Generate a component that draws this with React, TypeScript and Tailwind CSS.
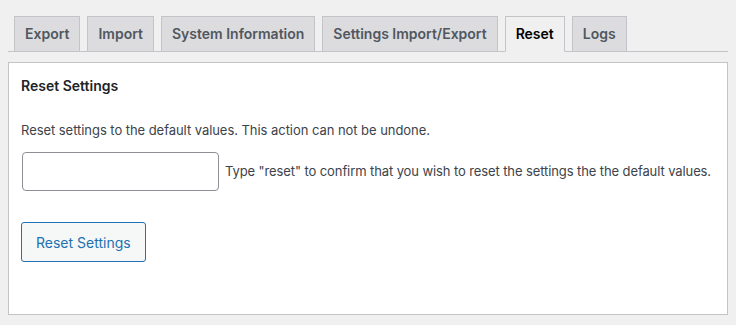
export default function App() {
  const tabs = ['Export', 'Import', 'System Information', 'Settings Import/Export', 'Reset', 'Logs']
  const active = 'Reset'

  return (
    <main
      className="min-h-screen bg-[#f0f0f1] px-2 pt-4 text-[#3c434a]"
      style={{ fontFamily: 'Inter, "Liberation Sans", sans-serif' }}
    >
      {/* Tabs */}
      <nav className="flex gap-[7px] border-b border-[#c3c4c7] pl-[6px]">
        {tabs.map((t) => (
          <a
            key={t}
            className={
              t === active
                ? '-mb-px border border-[#c3c4c7] border-b-[#f0f0f1] bg-[#f0f0f1] px-[10px] py-[5px] text-[14px] leading-6 font-semibold text-black'
                : 'border border-b-0 border-[#c3c4c7] bg-[#dcdcde] px-[10px] py-[5px] text-[14px] leading-6 font-semibold text-[#50575e]'
            }
          >
            {t}
          </a>
        ))}
      </nav>

      {/* Panel */}
      <section className="mt-[10px] h-[253px] w-[720px] border border-[#c3c4c7] bg-white px-3 pt-3">
        <h2 className="text-[14px] leading-[22px] font-semibold text-[#1d2327]">Reset Settings</h2>
        <p className="mt-[23px] text-[13px] leading-5 tracking-[-0.05px]">
          Reset settings to the default values. This action can not be undone.
        </p>
        <div className="mt-[12px] flex items-center gap-[6px] pl-px">
          <input className="h-[39px] w-[197px] shrink-0 rounded border border-[#8c8f94] bg-white px-2 text-[14px] outline-none" />
          <span className="whitespace-nowrap text-[13px] tracking-[-0.1px]">
            Type "reset" to confirm that you wish to reset the settings the the default values.
          </span>
        </div>
        <button className="mt-[31px] h-[40px] rounded-[3px] border border-[#2271b1] bg-[#f6f7f7] px-[14px] text-[14px] text-[#2271b1]">
          Reset Settings
        </button>
      </section>
    </main>
  )
}
